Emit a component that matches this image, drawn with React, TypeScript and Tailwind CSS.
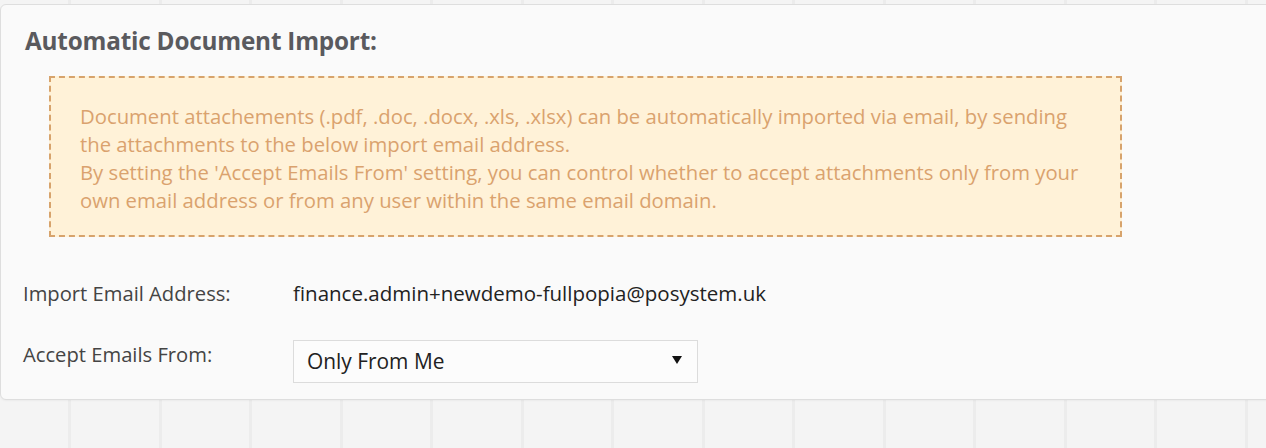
import React from "react";

export default function App() {
  const cols = Array.from({ length: 14 });
  return (
    <div className="relative w-[1266px] h-[448px] overflow-hidden bg-[#f4f4f4]" style={{ fontFamily: '"Open Sans", "Noto Sans", sans-serif' }}>
      <div className="absolute inset-0 flex">
        <div className="w-[68px] shrink-0" />
        {cols.map((_, i) => (
          <div key={i} className="w-[90.5px] shrink-0 border-l-[3px] border-[#ececec]" />
        ))}
      </div>
      <div className="relative mt-[4px] w-[1290px] h-[396px] bg-[#fafafa] border border-[#dedede] rounded-l-[6px] shadow-[0_1px_2px_rgba(0,0,0,0.04)]">
        <div className="pl-[24px] pt-[20px]">
          <h2 className="text-[24.3px] leading-[32px] font-bold text-[#5a5a5e] tracking-[-0.2px]">Automatic Document Import:</h2>
        </div>
        <div className="ml-[48px] mt-[19px] w-[1073px] h-[161px] bg-[#fff2d8] border-2 border-dashed border-[#d7a36c] pl-[29px] pt-[24px] text-[20.3px] leading-[28px] text-[#daa26e]">
          <p className="whitespace-nowrap">
            Document attachements (.pdf, .doc, .docx, .xls, .xlsx) can be automatically imported via email, by sending<br />
            the attachments to the below import email address.<br />
            By setting the 'Accept Emails From' setting, you can control whether to accept attachments only from your<br />
            own email address or from any user within the same email domain.
          </p>
        </div>
        <div className="mt-[42px] pl-[22px] flex flex-col">
          <div className="flex items-center h-[28px]">
            <div className="w-[270px] text-[20.2px] text-[#444444]">Import Email Address:</div>
            <div className="text-[20.5px] text-[#222222]">finance.admin+newdemo-fullpopia@posystem.uk</div>
          </div>
          <div className="flex items-start mt-[33px]">
            <div className="w-[270px] text-[20.2px] text-[#444444] leading-[28px]">Accept Emails From:</div>
            <div className="w-[405px] h-[43px] border border-[#dcdcdc] bg-[#fcfcfc] flex items-center justify-between pl-[13px] pr-[15px]">
              <span className="text-[20.9px] text-[#222222]">Only From Me</span>
              <svg width="10" height="8" viewBox="0 0 10 8" className="mt-[-3px]">
                <polygon points="0,0 10,0 5,8" fill="#111" />
              </svg>
            </div>
          </div>
        </div>
      </div>
    </div>
  );
}
